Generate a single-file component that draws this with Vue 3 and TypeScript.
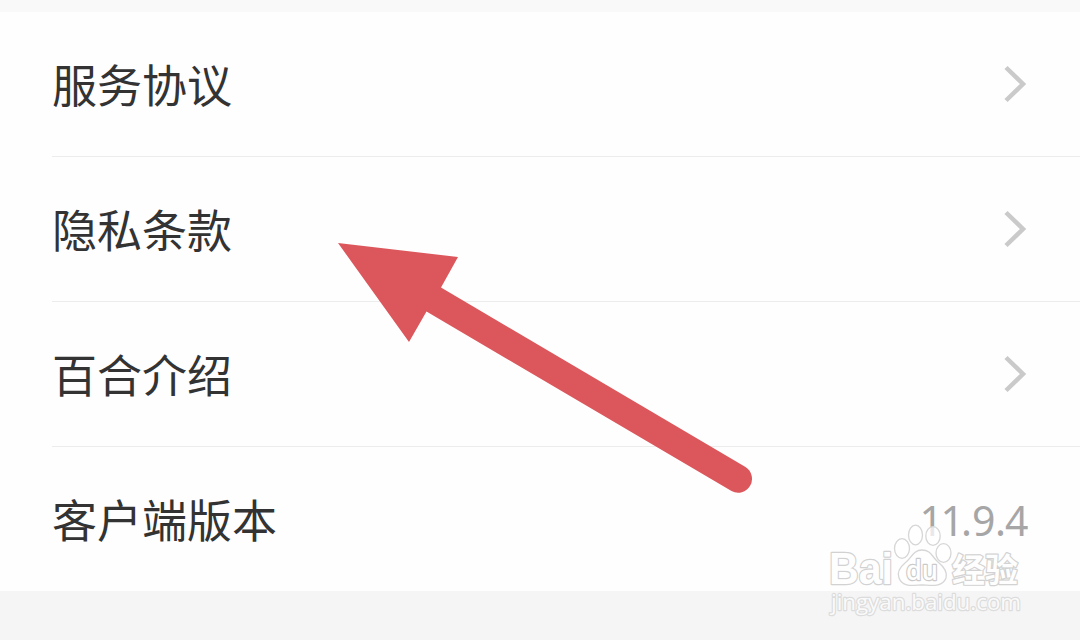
<script setup lang="ts">
interface Row {
  label: string
  version?: boolean
}

const rows: Row[] = [
  { label: '服务协议' },
  { label: '隐私条款' },
  { label: '百合介绍' },
  { label: '客户端版本', version: true },
]
</script>

<template>
  <main class="screen">
    <section class="list">
      <div v-for="row in rows" :key="row.label" class="row">
        <span class="label">{{ row.label }}</span>
        <svg v-if="row.version" class="version" width="120" height="60" viewBox="0 0 120 60">
          <text x="9.5 30.5 51 62 85 95" y="47">11.9.4</text>
        </svg>
        <svg v-else class="chevron" width="26" height="40" viewBox="0 0 26 40">
          <path d="M3 3.5 20 20 3 36.5" />
        </svg>
      </div>
    </section>

    <svg class="arrow" width="1080" height="640" viewBox="0 0 1080 640">
      <path
        d="M338 243 458 257 441 287.500 745.500 467A13.900 13.900 0 0 1 731.500 491L426.500 311.500 409 342Z"
      />
    </svg>

    <svg class="watermark" width="220" height="110" viewBox="820 515 220 110">
      <g class="paw">
        <ellipse cx="915.500" cy="535" rx="7" ry="9.800" />
        <ellipse cx="933" cy="536" rx="7.200" ry="9.300" />
        <ellipse cx="902" cy="548.500" rx="7.500" ry="9.800" />
        <ellipse cx="943.500" cy="553" rx="7.500" ry="9.300" />
        <path
          d="M922 550C913 550 911 559 905 563C899 568 897 573 899 578C903 588 914 585 922 585C930 585 942 588 946 578C948 571 943 566 938 562C932 557 931 550 922 550Z"
        />
      </g>
      <text class="bai" x="829" y="584" textLength="64" lengthAdjust="spacingAndGlyphs">Bai</text>
      <text class="cn" x="952" y="582" textLength="66">经验</text>
      <text class="url" x="831" y="610" textLength="190" lengthAdjust="spacingAndGlyphs">jingyan.baidu.com</text>
      <text class="du" x="906" y="580" textLength="32" lengthAdjust="spacingAndGlyphs">du</text>
    </svg>
  </main>
</template>

<style>
body {
  margin: 0;
}
</style>

<style scoped>
.screen {
  position: relative;
  box-sizing: border-box;
  width: 1080px;
  height: 640px;
  padding-top: 12px;
  overflow: hidden;
  background: linear-gradient(#f9f9f9 0 12px, #f5f5f5 12px);
  font-family: "Noto Sans", "Noto Sans CJK SC", sans-serif;
}
.list {
  height: 579px;
  padding-left: 52px;
  background: #fefefe;
}
.row {
  display: flex;
  box-sizing: border-box;
  height: 145px;
  align-items: center;
  justify-content: space-between;
  border-bottom: 1px solid #ececec;
}
.row:last-child {
  height: 144px;
  border-bottom: 0;
}
.label {
  color: #333;
  font-family: "Noto Sans CJK SC", sans-serif;
  font-size: 45px;
  line-height: 66px;
}
.chevron {
  margin-right: 51px;
}
.chevron path {
  fill: none;
  stroke: #cacaca;
  stroke-width: 4.500;
}
.version {
  margin-right: 50px;
  overflow: visible;
}
.version text {
  fill: #a6a6a6;
  font-size: 41px;
}
.arrow {
  position: absolute;
  inset: 0;
}
.arrow path {
  fill: #dc575c;
}
.watermark {
  position: absolute;
  left: 820px;
  top: 515px;
}
.paw > * {
  fill: #fff;
  fill-opacity: 0.75;
  stroke: #d6d6d6;
  stroke-width: 1.300;
}
.watermark text {
  fill: #fefefe;
  stroke: #d2d2d2;
  stroke-width: 2.400;
  stroke-linejoin: round;
  paint-order: stroke;
}
.watermark .bai {
  font: bold 44px "Liberation Sans", sans-serif;
}
.watermark .cn {
  font: bold 33px "Noto Sans CJK SC", sans-serif;
}
.watermark .url {
  fill: #fafafa;
  stroke: #dcdcdc;
  font: 22.500px "Open Sans", sans-serif;
}
.watermark .du {
  stroke: #cacaca;
  font: 600 27px "Open Sans", sans-serif;
}
</style>
